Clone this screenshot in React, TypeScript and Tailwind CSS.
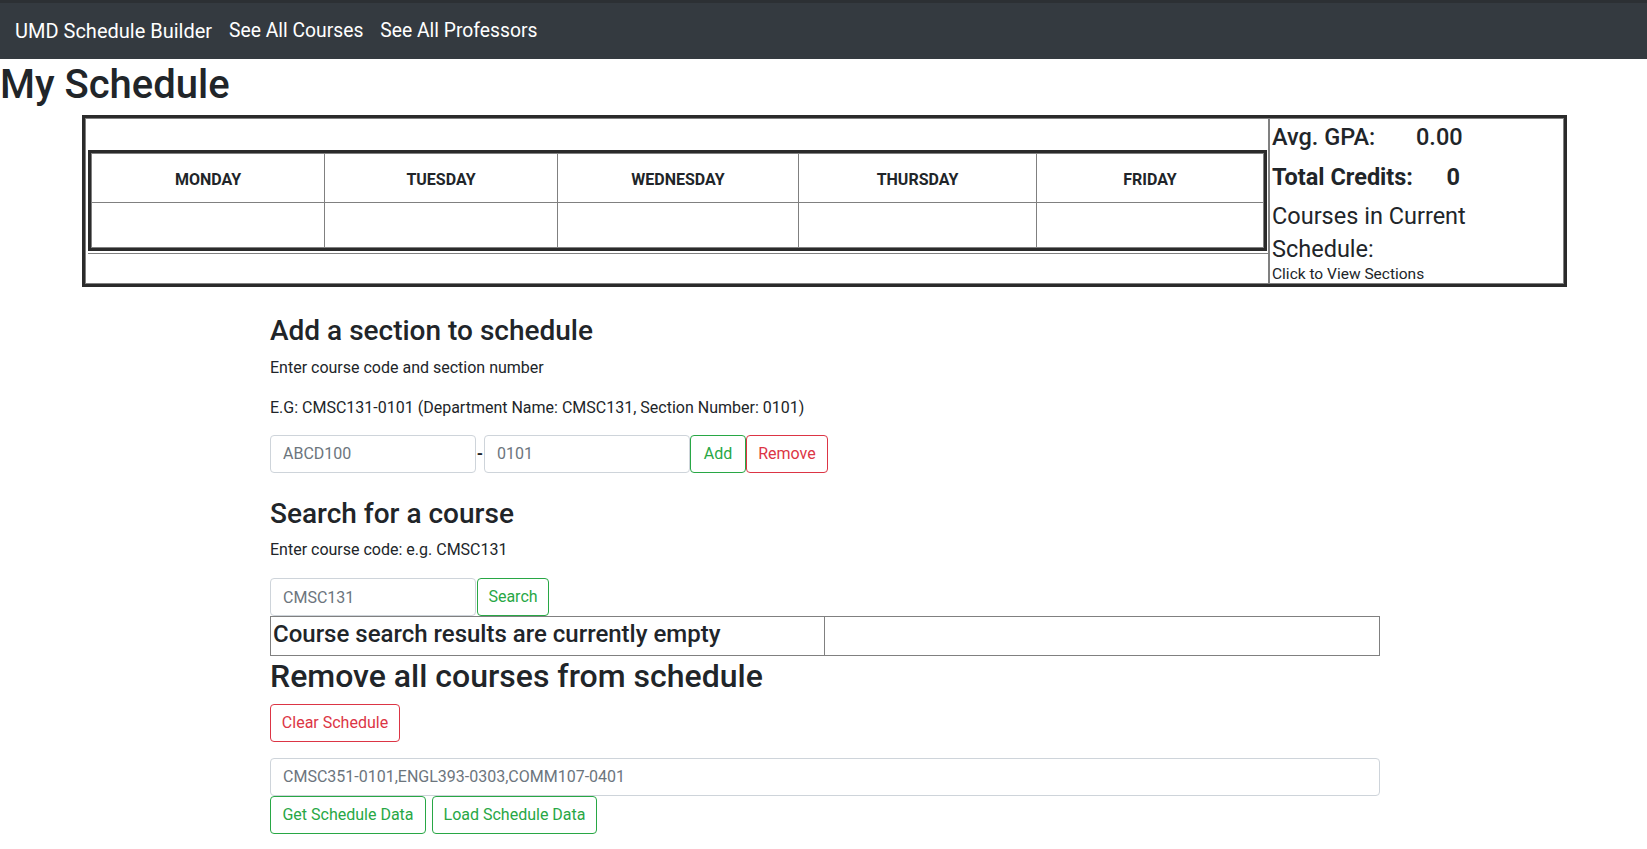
import React from "react";

/** Weekday header cells; widths follow the auto table layout in the original page. */
const DAYS = [
  { name: "MONDAY", width: "w-[233px] border-r" },
  { name: "TUESDAY", width: "w-[233px] border-r" },
  { name: "WEDNESDAY", width: "w-[241px] border-r" },
  { name: "THURSDAY", width: "w-[238px] border-r" },
  { name: "FRIDAY", width: "flex-1" },
];

function NavBar() {
  return (
    <nav className="h-[59px] bg-[#343a40] border-t-[3px] border-[#2c3034] flex items-start pt-[13px] pl-[15px] gap-[17px] leading-[30px] text-white">
      <a href="#" className="text-white text-[20px]">UMD Schedule Builder</a>
      <a href="#" className="text-white text-[19.3px]">See All Courses</a>
      <a href="#" className="text-white text-[19.3px]">See All Professors</a>
    </nav>
  );
}

function OutlineButton({
  label,
  tone,
  width,
}: {
  label: string;
  tone: "success" | "danger";
  width: string;
}) {
  const toneClass =
    tone === "success"
      ? "border-[#28a745] text-[#28a745]"
      : "border-[#dc3545] text-[#dc3545]";
  return (
    <button
      type="button"
      className={`${width} ${toneClass} h-[38px] shrink-0 border rounded-[4px] bg-white text-[16px] leading-6 text-center`}
    >
      {label}
    </button>
  );
}

function TextInput({ placeholder, width }: { placeholder: string; width: string }) {
  return (
    <input
      type="text"
      placeholder={placeholder}
      className={`${width} h-[38px] shrink-0 border border-[#ced4da] rounded-[4px] px-[12px] text-[16px] leading-6 text-[#495057] placeholder:text-[#6c757d] bg-white outline-none`}
    />
  );
}

function ScheduleGrid() {
  return (
    <div className="ml-[82px] w-[1485px] border-[3px] border-[#2b2b2b] flex">
      {/* left cell: week table */}
      <div className="w-[1184px] h-[166px] border border-[#808080] pt-[31px]">
        <div className="ml-[2px] w-[1179px] border-[3px] border-[#2b2b2b]">
          <div className="border border-[#808080]">
            <div className="flex h-[49px] border-b border-[#808080]">
              {DAYS.map((d) => (
                <div
                  key={d.name}
                  className={`${d.width} border-[#808080] flex items-center justify-center pt-[3px] text-[16px] leading-6 font-bold text-[#212529]`}
                >
                  {d.name}
                </div>
              ))}
            </div>
            <div className="flex h-[44px]">
              {DAYS.map((d) => (
                <div key={d.name} className={`${d.width} border-[#808080]`} />
              ))}
            </div>
          </div>
        </div>
        <div className="ml-[2px] mt-[2px] h-px bg-[#808080]" />
      </div>

      {/* right cell: totals */}
      <div className="flex-1 h-[166px] border border-[#808080] pl-[2px] text-[#212529]">
        <div className="flex text-[23.5px] leading-[36px] font-medium">
          <span className="w-[144px]">Avg. GPA:</span>
          <span className="w-[44px] text-right">0.00</span>
        </div>
        <div className="flex mt-[4px] text-[23.5px] leading-[36px] font-bold">
          <span className="w-[144px]">Total Credits:</span>
          <span className="w-[44px] text-right">0</span>
        </div>
        <div className="mt-[5px] text-[23.5px] leading-[33px]">
          Courses in Current
          <br />
          Schedule:
        </div>
        <div className="text-[15.5px] leading-[17px]">Click to View Sections</div>
      </div>
    </div>
  );
}

export default function App() {
  return (
    <div className="min-h-[849px] bg-white text-[#212529] font-['Roboto','Liberation_Sans',sans-serif]">
      <NavBar />

      <h1 className="pt-[2px] mb-[6px] text-[40px] leading-[48px] font-medium">My Schedule</h1>

      <ScheduleGrid />

      <div className="ml-[270px] w-[1110px] mt-[27px]">
        {/* add a section */}
        <h3 className="text-[28px] leading-[33.6px] font-medium mb-[8px]">Add a section to schedule</h3>
        <p className="text-[16px] leading-6 mb-4">Enter course code and section number</p>
        <p className="text-[16px] leading-6 mb-[15px]">
          E.G: CMSC131-0101 (Department Name: CMSC131, Section Number: 0101)
        </p>
        <div className="flex items-center">
          <TextInput placeholder="ABCD100" width="w-[206px]" />
          <span className="w-[8px] text-center text-[16px] font-bold text-[#212529]">-</span>
          <TextInput placeholder="0101" width="w-[206px]" />
          <OutlineButton label="Add" tone="success" width="w-[56px]" />
          <OutlineButton label="Remove" tone="danger" width="w-[82px]" />
        </div>

        {/* search */}
        <h3 className="mt-[24px] text-[28px] leading-[33.6px] font-medium mb-[8px]">Search for a course</h3>
        <p className="text-[16px] leading-6 mb-4">Enter course code: e.g. CMSC131</p>
        <div className="flex items-center">
          <TextInput placeholder="CMSC131" width="w-[206px]" />
          <div className="ml-[1px]">
            <OutlineButton label="Search" tone="success" width="w-[72px]" />
          </div>
        </div>
        <div className="flex h-[40px] border border-[#808080]">
          <div className="w-[554px] border-r border-[#808080] pl-[2px] pt-[3px] text-[24px] leading-[28.8px] font-medium whitespace-nowrap">
            Course search results are currently empty
          </div>
          <div className="flex-1" />
        </div>

        {/* clear / import */}
        <h2 className="mt-[1px] mb-[8px] text-[32px] leading-[38.4px] font-medium">
          Remove all courses from schedule
        </h2>
        <div className="mb-4">
          <OutlineButton label="Clear Schedule" tone="danger" width="w-[130px]" />
        </div>
        <TextInput placeholder="CMSC351-0101,ENGL393-0303,COMM107-0401" width="w-full" />
        <div className="flex gap-[6px]">
          <OutlineButton label="Get Schedule Data" tone="success" width="w-[156px]" />
          <OutlineButton label="Load Schedule Data" tone="success" width="w-[165px]" />
        </div>
      </div>
    </div>
  );
}
